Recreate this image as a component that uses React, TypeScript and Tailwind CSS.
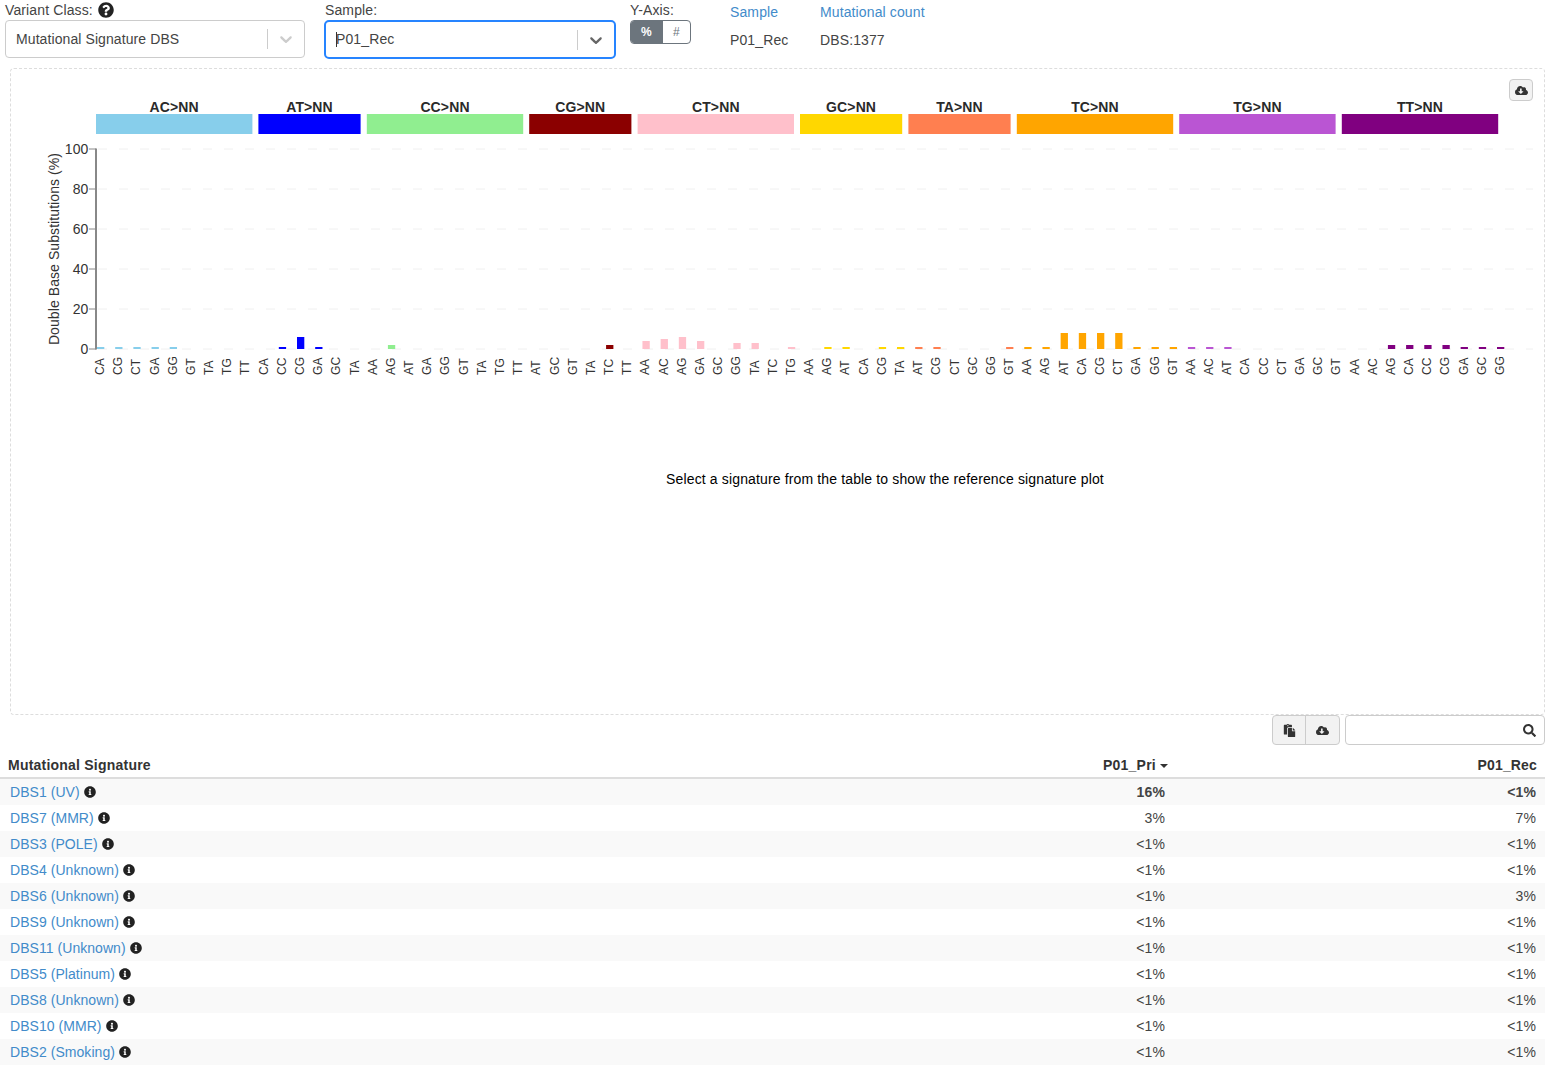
import { FaCloudDownloadAlt, FaInfoCircle, FaPaste, FaQuestionCircle, FaSearch } from "react-icons/fa"

const CHEVRON =
  "M4.516 7.548c0.436-0.446 1.043-0.481 1.576 0l3.908 3.747 3.908-3.747c0.533-0.481 1.141-0.446 1.574 0 0.436 0.445 0.408 1.197 0 1.615-0.406 0.418-4.695 4.502-4.695 4.502-0.217 0.223-0.502 0.335-0.787 0.335s-0.57-0.112-0.789-0.335c0 0-4.287-4.084-4.695-4.502s-0.436-1.17 0-1.615z"

// each group: name, colour, header bar x range, bars as [label, percent]
const groups: { name: string; color: string; x0: number; x1: number; bars: [string, number][] }[] = [
  { name: "AC>NN", color: "#87ceeb", x0: 96, x1: 252.4, bars: [["CA", 1], ["CG", 1], ["CT", 1], ["GA", 1], ["GG", 1], ["GT", 0], ["TA", 0], ["TG", 0], ["TT", 0]] },
  { name: "AT>NN", color: "#0000ff", x0: 258.4, x1: 360.6, bars: [["CA", 0], ["CC", 1], ["CG", 6], ["GA", 1], ["GC", 0], ["TA", 0]] },
  { name: "CC>NN", color: "#90ee90", x0: 366.8, x1: 523.2, bars: [["AA", 0], ["AG", 2], ["AT", 0], ["GA", 0], ["GG", 0], ["GT", 0], ["TA", 0], ["TG", 0], ["TT", 0]] },
  { name: "CG>NN", color: "#8b0000", x0: 529.2, x1: 631.4, bars: [["AT", 0], ["GC", 0], ["GT", 0], ["TA", 0], ["TC", 2], ["TT", 0]] },
  { name: "CT>NN", color: "#ffc0cb", x0: 637.6, x1: 794, bars: [["AA", 4], ["AC", 5], ["AG", 6], ["GA", 4], ["GC", 0], ["GG", 3], ["TA", 3], ["TC", 0], ["TG", 1]] },
  { name: "GC>NN", color: "#ffd700", x0: 800, x1: 902.2, bars: [["AA", 0], ["AG", 1], ["AT", 1], ["CA", 0], ["CG", 1], ["TA", 1]] },
  { name: "TA>NN", color: "#ff7f50", x0: 908.4, x1: 1010.6, bars: [["AT", 1], ["CG", 1], ["CT", 0], ["GC", 0], ["GG", 0], ["GT", 1]] },
  { name: "TC>NN", color: "#ffa500", x0: 1016.8, x1: 1173.2, bars: [["AA", 1], ["AG", 1], ["AT", 8], ["CA", 8], ["CG", 8], ["CT", 8], ["GA", 1], ["GG", 1], ["GT", 1]] },
  { name: "TG>NN", color: "#ba55d3", x0: 1179.2, x1: 1335.6, bars: [["AA", 1], ["AC", 1], ["AT", 1], ["CA", 0], ["CC", 0], ["CT", 0], ["GA", 0], ["GC", 0], ["GT", 0]] },
  { name: "TT>NN", color: "#800080", x0: 1341.8, x1: 1498.2, bars: [["AA", 0], ["AC", 0], ["AG", 2], ["CA", 2], ["CC", 2], ["CG", 2], ["GA", 1], ["GC", 1], ["GG", 1]] },
]

const rows: [string, string, string][] = [
  ["DBS1 (UV)", "16%", "<1%"],
  ["DBS7 (MMR)", "3%", "7%"],
  ["DBS3 (POLE)", "<1%", "<1%"],
  ["DBS4 (Unknown)", "<1%", "<1%"],
  ["DBS6 (Unknown)", "<1%", "3%"],
  ["DBS9 (Unknown)", "<1%", "<1%"],
  ["DBS11 (Unknown)", "<1%", "<1%"],
  ["DBS5 (Platinum)", "<1%", "<1%"],
  ["DBS8 (Unknown)", "<1%", "<1%"],
  ["DBS10 (MMR)", "<1%", "<1%"],
  ["DBS2 (Smoking)", "<1%", "<1%"],
]

function Chevron({ color }: { color: string }) {
  return (
    <svg viewBox="0 0 20 20" width="20" height="20" fill={color}>
      <path d={CHEVRON} />
    </svg>
  )
}

function Chart() {
  let i = 0
  const step = 1400 / 77
  return (
    <svg viewBox="11 69 1533 320" width="1533" height="320" className="block" fontFamily="'Liberation Sans', Arial, sans-serif">
      {[0, 20, 40, 60, 80, 100].map((v) => (
        <g key={v}>
          <line x1="98" x2="1533" y1={349 - v * 2} y2={349 - v * 2} stroke="#f0f0f0" strokeWidth="1" strokeDasharray="9 12" />
          <line x1="89" x2="96" y1={349 - v * 2} y2={349 - v * 2} stroke="#888888" strokeWidth="1" />
          <text x="88.5" y={354 - v * 2} textAnchor="end" fontSize="14" fill="#333333">{v}</text>
        </g>
      ))}
      <line x1="96" x2="96" y1="148.5" y2="349.5" stroke="#888888" strokeWidth="2" />
      <text transform="translate(59 249) rotate(-90)" textAnchor="middle" fontSize="14" letterSpacing="0.08" fill="#333333">Double Base Substitutions (%)</text>
      {groups.map((g) => (
        <g key={g.name}>
          <rect x={g.x0} y="114" width={g.x1 - g.x0} height="20" fill={g.color} />
          <text x={(g.x0 + g.x1) / 2} y="112" textAnchor="middle" fontSize="14" fontWeight="700" fill="#2a2a2a">{g.name}</text>
          {g.bars.map(([label, pct]) => {
            const x = 100 + step * i++
            return (
              <g key={label + i}>
                {pct > 0 && <rect x={x - 3} y={349 - pct * 2} width="7.3" height={pct * 2} fill={g.color} />}
                <text transform={`translate(${x + 4} 375) rotate(-90)`} fontSize="12" fill="#333333">{label}</text>
              </g>
            )
          })}
        </g>
      ))}
    </svg>
  )
}

export default function App() {
  return (
    <div className="w-[1545px] h-[1070px] overflow-hidden bg-white text-[14px] tracking-[0.12px] text-[#444] font-['Liberation_Sans',Arial,sans-serif]">
      <div className="flex h-[68px]">
        <div className="ml-[5px] w-[300px]">
          <div className="flex h-5 items-center gap-[5px] leading-5">
            Variant Class:
            <FaQuestionCircle className="text-[16px] text-[#222]" />
          </div>
          <div className="flex h-[38px] items-center rounded border border-[#ccc] bg-white pl-[10px] pr-2">
            <span className="flex-1 pt-px tracking-[0.09px]">Mutational Signature DBS</span>
            <span className="h-5 w-px bg-[#ccc]" />
            <span className="ml-2"><Chevron color="#ccc" /></span>
          </div>
        </div>
        <div className="ml-5 w-[291px]">
          <div className="h-5 leading-5">Sample:</div>
          <div className="-ml-px flex h-[39px] items-center rounded-[5px] border-2 border-[#2684ff] bg-white pl-[10px] pr-2">
            <span className="flex-1 border-l border-[#333] leading-[15px]">
              <span className="-ml-px">P01_Rec</span>
            </span>
            <span className="h-5 w-px bg-[#ccc]" />
            <span className="ml-2"><Chevron color="#666" /></span>
          </div>
        </div>
        <div className="ml-[15px] w-[100px]">
          <div className="-ml-px h-5 leading-5">Y-Axis:</div>
          <div className="-ml-px flex h-6 w-[61px] overflow-hidden rounded border border-[#6c757d] text-[12px]">
            <span className="flex w-8 items-center justify-center bg-[#6c757d] pr-px font-bold text-white">%</span>
            <span className="flex flex-1 items-center justify-center text-[#6c757d]">#</span>
          </div>
        </div>
        <div className="-ml-px w-[90px] pt-[2px]">
          <div className="text-[#428bca] leading-[20px]">Sample</div>
          <div className="mt-2 leading-[20px]">P01_Rec</div>
        </div>
        <div className="pt-[2px]">
          <div className="text-[#428bca] leading-[20px]">Mutational count</div>
          <div className="mt-2 leading-[20px]">DBS:1377</div>
        </div>
      </div>

      <div className="relative ml-[10px] h-[647px] rounded border border-dashed border-[#ddd]">
        <button className="absolute top-[10px] right-[11px] flex h-[22px] w-6 items-center justify-center rounded border border-[#ccc] bg-[#f2f2f2] text-[13px] text-[#333]">
          <FaCloudDownloadAlt />
        </button>
        <Chart />
        <div className="ml-[215px] mt-[80px] text-center leading-5 tracking-[0.14px] text-black">
          Select a signature from the table to show the reference signature plot
        </div>
      </div>

      <div className="flex h-[30px] justify-end">
        <div className="flex h-[30px] overflow-hidden rounded border border-[#ccc] bg-[#f2f2f2] text-[13px] text-[#333]">
          <span className="flex w-[33px] items-center justify-center border-r border-[#ccc]"><FaPaste /></span>
          <span className="flex w-[33px] items-center justify-center"><FaCloudDownloadAlt /></span>
        </div>
        <div className="ml-[5px] flex h-[30px] w-[200px] items-center justify-end rounded border border-[#ccc] bg-white pr-[8px] text-[13px] text-[#333]">
          <FaSearch />
        </div>
      </div>

      <table className="mt-[7px] w-full table-fixed border-collapse">
        <thead>
          <tr className="h-[26px] border-b-2 border-[#ddd] font-bold text-[#333]">
            <th className="pl-2 pt-[2px] text-left font-bold tracking-[0.22px]">Mutational Signature</th>
            <th className="w-[373px] pr-[5px] pt-[2px] text-right font-bold tracking-[0.25px]">
              <span className="inline-flex items-center justify-end gap-1">
                P01_Pri
                <span className="mt-px h-0 w-0 border-x-[4px] border-t-[4px] border-x-transparent border-t-[#333]" />
              </span>
            </th>
            <th className="w-[372px] pr-2 pt-[2px] text-right font-bold tracking-[0.15px]">P01_Rec</th>
          </tr>
        </thead>
        <tbody>
          {rows.map((r, idx) => (
            <tr key={r[0]} className={idx % 2 === 0 ? "bg-[#f9f9f9]" : ""}>
              <td className="h-[26px] pl-[10px] leading-[26px]">
                <span className="flex items-center gap-[4px]">
                  <span className="tracking-[0.05px] text-[#428bca]">{r[0]}</span>
                  <FaInfoCircle className="text-[12px] text-[#222]" />
                </span>
              </td>
              <td className={idx === 0 ? "h-[26px] pr-[8px] text-right font-bold leading-[26px]" : "h-[26px] pr-[8px] text-right leading-[26px]"}>{r[1]}</td>
              <td className={idx === 0 ? "h-[26px] pr-[9px] text-right font-bold leading-[26px]" : "h-[26px] pr-[9px] text-right leading-[26px]"}>{r[2]}</td>
            </tr>
          ))}
        </tbody>
      </table>
    </div>
  )
}
